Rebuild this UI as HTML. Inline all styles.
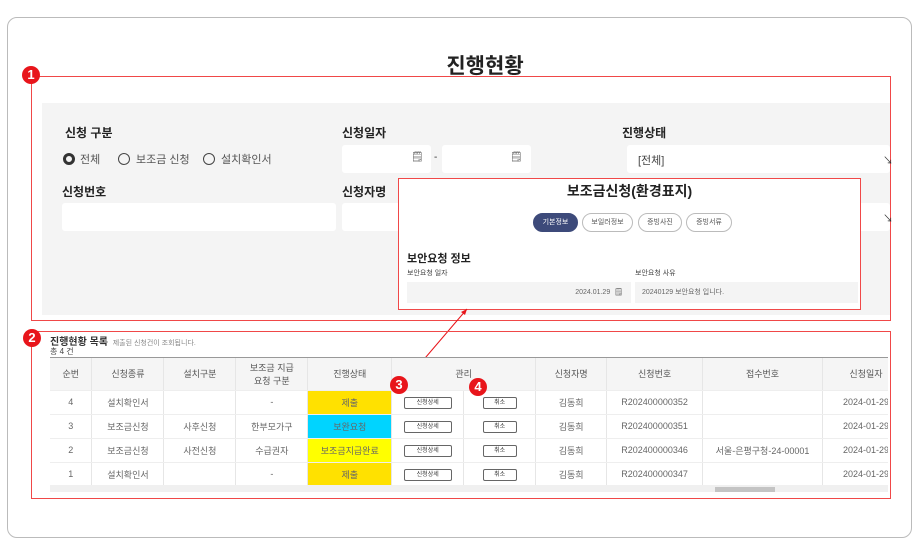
<!DOCTYPE html>
<html><head><meta charset="utf-8"><style>
*{box-sizing:border-box;margin:0;padding:0}
body{width:922px;height:552px;background:#fff;font-family:"Liberation Sans","Noto Sans CJK KR",sans-serif;position:relative;overflow:hidden;color:#333}
.a{position:absolute}
.card{left:7px;top:17px;width:905px;height:521px;border:1px solid #bbb;border-radius:10px}
.red{border:1px solid #f04848}
.badge{width:18px;height:18px;border-radius:50%;background:#e8151b;color:#fff;font-size:13px;font-weight:bold;text-align:center;line-height:18px}
.lbl{font-size:12px;font-weight:bold;color:#222}
.inp{background:#fff;border-radius:3px}
.radio{width:12px;height:12px;border:1.5px solid #444;border-radius:50%}
.tab{height:19px;border:1px solid #bbb;border-radius:10px;font-size:7px;text-align:center;line-height:17px;color:#555;background:#fff}
table{border-collapse:collapse;font-size:9px;color:#666}
td,th{text-align:center;border-right:1px solid #e6e6e6;border-bottom:1px solid #eee;padding:0;font-weight:normal}
th{background:#f5f5f5;height:32px;color:#555}
td{height:24px}
.btn{display:inline-block;width:48px;height:12px;border:1px solid #666;border-radius:2px;font-size:6px;line-height:10px;color:#333}
.btn2{width:34px}
</style></head><body>
<div class="a card"></div>
<div class="a" style="left:0;width:970px;top:50px;text-align:center;font-size:21px;font-weight:bold;color:#222">진행현황</div>

<div class="a red" style="left:31px;top:76px;width:860px;height:245px"></div>
<div class="a" style="left:42px;top:103px;width:848px;height:212px;background:#f4f4f4"></div>
<div class="a badge" style="left:22px;top:66px">1</div>
<div class="a lbl" style="left:65px;top:124px">신청 구분</div>
<div class="a radio" style="left:63px;top:153px;border:3.5px solid #333"></div>
<div class="a" style="left:80px;top:151px;font-size:11px;color:#555">전체</div>
<div class="a radio" style="left:118px;top:153px"></div>
<div class="a" style="left:136px;top:151px;font-size:11px;color:#555">보조금 신청</div>
<div class="a radio" style="left:203px;top:153px"></div>
<div class="a" style="left:221px;top:151px;font-size:11px;color:#555">설치확인서</div>
<div class="a lbl" style="left:342px;top:124px">신청일자</div>
<div class="a inp" style="left:342px;top:145px;width:89px;height:28px"></div>
<div class="a" style="left:411px;top:152px;font-size:10px;color:#666">🗒</div>
<div class="a" style="left:434px;top:152px;font-size:10px">-</div>
<div class="a inp" style="left:442px;top:145px;width:89px;height:28px"></div>
<div class="a" style="left:510px;top:152px;font-size:10px;color:#666">🗒</div>
<div class="a lbl" style="left:622px;top:124px">진행상태</div>
<div class="a inp" style="left:627px;top:145px;width:263px;height:28px"></div>
<div class="a" style="left:638px;top:152px;font-size:11px;color:#444">[전체]</div>
<div class="a" style="left:883px;top:152px;font-size:10px">↘</div>
<div class="a lbl" style="left:62px;top:183px">신청번호</div>
<div class="a inp" style="left:62px;top:203px;width:274px;height:28px"></div>
<div class="a lbl" style="left:342px;top:183px">신청자명</div>
<div class="a inp" style="left:342px;top:203px;width:548px;height:28px"></div>
<div class="a" style="left:883px;top:210px;font-size:10px">↘</div>

<div class="a red" style="left:398px;top:178px;width:463px;height:132px;background:#fff"></div>
<div class="a" style="left:398px;top:181px;width:463px;text-align:center;font-size:14px;font-weight:bold;color:#222">보조금신청(환경표지)</div>
<div class="a tab" style="left:533px;top:213px;width:45px;background:#3d4a7a;color:#fff;border-color:#3d4a7a">기본정보</div>
<div class="a tab" style="left:582px;top:213px;width:51px">보일러정보</div>
<div class="a tab" style="left:638px;top:213px;width:44px">증빙사진</div>
<div class="a tab" style="left:686px;top:213px;width:46px">증빙서류</div>
<div class="a" style="left:407px;top:250px;font-size:11px;font-weight:bold;color:#222">보안요청 정보</div>
<div class="a" style="left:407px;top:268px;font-size:7px;color:#444">보안요청 일자</div>
<div class="a" style="left:635px;top:268px;font-size:7px;color:#444">보안요청 사유</div>
<div class="a" style="left:407px;top:282px;width:224px;height:21px;background:#f4f4f4;font-size:7px;color:#666;text-align:right;padding-right:8px;line-height:21px">2024.01.29 &nbsp;🗒</div>
<div class="a" style="left:635px;top:282px;width:223px;height:21px;background:#f4f4f4;font-size:7px;color:#666;padding-left:7px;line-height:21px">20240129 보안요청 입니다.</div>

<svg class="a" style="left:0;top:0" width="922" height="552"><line x1="408" y1="378" x2="467" y2="309" stroke="#e8151b" stroke-width="1"/><polygon points="467,309 461,312 465,315" fill="#e8151b"/></svg>

<div class="a red" style="left:31px;top:331px;width:860px;height:168px"></div>
<div class="a badge" style="left:23px;top:329px">2</div>
<div class="a" style="left:50px;top:333px;font-size:10px;font-weight:bold;color:#333">진행현황 목록 <span style="font-size:7px;font-weight:normal;color:#888">&nbsp;제출된 신청건이 조회됩니다.</span></div>
<div class="a" style="left:50px;top:346px;font-size:8px;color:#444">총 4 건</div>
<div class="a" style="left:50px;top:357px;width:838px;height:135px;overflow:hidden;border-top:1px solid #999">
<table style="width:860px">
<colgroup><col width="42"><col width="72"><col width="72"><col width="72"><col width="84"><col width="72"><col width="72"><col width="71"><col width="96"><col width="120"><col width="87"></colgroup>
<tr><th>순번</th><th>신청종류</th><th>설치구분</th><th>보조금 지급<br>요청 구분</th><th>진행상태</th><th colspan="2">관리</th><th>신청자명</th><th>신청번호</th><th>접수번호</th><th>신청일자</th></tr>
<tr><td>4</td><td>설치확인서</td><td></td><td>-</td><td style="background:#ffe100">제출</td><td><span class="btn">신청상세</span></td><td><span class="btn btn2">취소</span></td><td>김동희</td><td>R202400000352</td><td></td><td>2024-01-29</td></tr>
<tr><td>3</td><td>보조금신청</td><td>사후신청</td><td>한부모가구</td><td style="background:#00d4ff">보완요청</td><td><span class="btn">신청상세</span></td><td><span class="btn btn2">취소</span></td><td>김동희</td><td>R202400000351</td><td></td><td>2024-01-29</td></tr>
<tr><td>2</td><td>보조금신청</td><td>사전신청</td><td>수급권자</td><td style="background:#ffff00">보조금지급완료</td><td><span class="btn">신청상세</span></td><td><span class="btn btn2">취소</span></td><td>김동희</td><td>R202400000346</td><td>서울-은평구청-24-00001</td><td>2024-01-29</td></tr>
<tr><td>1</td><td>설치확인서</td><td></td><td>-</td><td style="background:#ffe100">제출</td><td><span class="btn">신청상세</span></td><td><span class="btn btn2">취소</span></td><td>김동희</td><td>R202400000347</td><td></td><td>2024-01-29</td></tr>
</table>
<div class="a" style="left:0;top:127px;width:838px;height:8px;background:#f0f0f0"></div>
<div class="a" style="left:665px;top:129px;width:60px;height:5px;background:#c4c4c4"></div>
</div>
<div class="a badge" style="left:390px;top:376px">3</div>
<div class="a badge" style="left:469px;top:378px">4</div>
</body></html>
